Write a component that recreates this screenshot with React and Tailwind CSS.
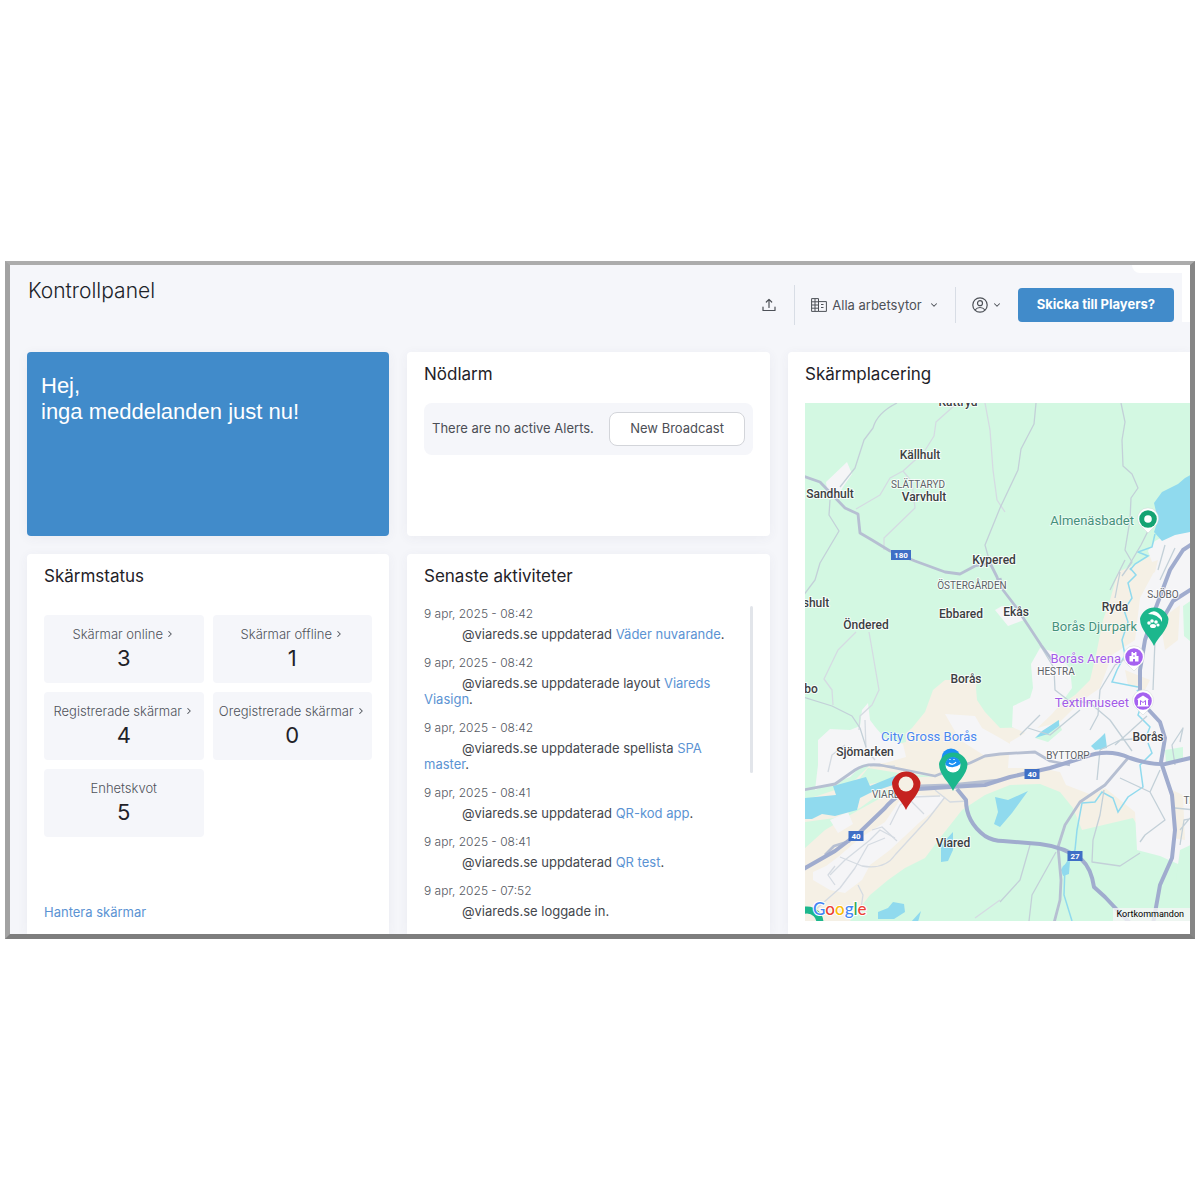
import {ChevronDown, ChevronRight} from "lucide-react";

const stats = [
    {label: "Skärmar online", value: 3, link: true},
    {label: "Skärmar offline", value: 1, link: true},
    {label: "Registrerade skärmar", value: 4, link: true},
    {label: "Oregistrerade skärmar", value: 0, link: true},
    {label: "Enhetskvot", value: 5, link: false},
];

const activities = [
    {date: "9 apr, 2025 - 08:42", text: "@viareds.se uppdaterad", target: "Väder nuvarande"},
    {date: "9 apr, 2025 - 08:42", text: "@viareds.se uppdaterade layout", target: "Viareds Viasign"},
    {date: "9 apr, 2025 - 08:42", text: "@viareds.se uppdaterade spellista", target: "SPA master"},
    {date: "9 apr, 2025 - 08:41", text: "@viareds.se uppdaterad", target: "QR-kod app"},
    {date: "9 apr, 2025 - 08:41", text: "@viareds.se uppdaterad", target: "QR test"},
    {date: "9 apr, 2025 - 07:52", text: "@viareds.se loggade in", target: null},
];

const places = [
    {name: "Kattryd", x: 958, y: 406},
    {name: "Källhult", x: 920, y: 459},
    {name: "Varvhult", x: 924, y: 501},
    {name: "Sandhult", x: 830, y: 498},
    {name: "Kypered", x: 994, y: 564},
    {name: "Ebbared", x: 961, y: 618},
    {name: "Ekås", x: 1016, y: 616},
    {name: "Ryda", x: 1115, y: 611},
    {name: "Öndered", x: 866, y: 629},
    {name: "Borås", x: 966, y: 683},
    {name: "Borås", x: 1148, y: 741},
    {name: "Sjömarken", x: 865, y: 756},
    {name: "Viared", x: 953, y: 847},
    {name: "shult", x: 816, y: 607},
    {name: "bo", x: 811, y: 693},
];

const districts = [
    {name: "SLÄTTARYD", x: 918, y: 488},
    {name: "ÖSTERGÅRDEN", x: 972, y: 589},
    {name: "SJÖBO", x: 1163, y: 598},
    {name: "HESTRA", x: 1056, y: 675},
    {name: "BYTTORP", x: 1068, y: 759},
    {name: "VIARED", x: 889, y: 798},
    {name: "TRANDARED", x: 1212, y: 804},
];

const shields = [
    {no: "180", x: 901, y: 555, w: 20},
    {no: "40", x: 856, y: 836, w: 15},
    {no: "40", x: 1032, y: 774, w: 15},
    {no: "27", x: 1075, y: 856, w: 15},
];

const trunkRoads = [
    "M800 871 835 851 860 832 885 808 Q898 792 918 789 L950 787 985 785 1010 777 1050 768 1085 757 Q1108 748 1130 758 Q1150 765 1165 764 L1195 757",
    "M957 789 966 800 Q966 822 985 836 Q993 841 1003 841 L1040 844 Q1065 847 1082 860 Q1091 868 1094 887 L1105 897 1120 913 1130 923",
    "M1195 542 1183 550 1170 570 1155 610 1145 640 1140 670 1140 692 1147 708 1160 722 1165 738 1161 762 1172 795 1175 830 1172 858 1160 885 1153 924",
    "M1152 625 1165 615 1173 601 1195 587",
];

const mainRoads = [
    "M803 476 820 482 845 508 858 514 860 533 872 540 890 551 915 561 945 572 960 574 975 566 990 563",
    "M803 790 835 784 855 770 Q865 763 880 765 L905 770 935 776 950 770 970 763 985 756 1000 754 1035 752 1050 761 1070 765",
    "M1000 578 1003 590 1016 607 1041 645 1052 660",
    "M1128 758 1105 785 1080 802 1065 825 1058 847 1061 880 1060 900 1054 923",
    "M990 563 997 577 1000 586",
    "M825 855 834 846 850 841 M920 786 950 785 1000 780",
];

const smallRoads = [
    "M897 403 Q877 413 873 428 L864 440 855 468 840 487",
    "M830 500 829 515 839 531 820 563 815 580 803 596",
    "M803 697 832 706 852 716 860 728 866 747",
    "M1036 403 1034 424 1021 449 1018 470 1000 508 985 545 990 563",
    "M1121 403 1125 422 1122 440 1123 466 1132 474 1138 488 1131 498 1130 520 1125 550 1132 562 1122 576",
    "M1152 523 1141 545 1128 567",
    "M1040 645 1054 668 1055 690 1068 700 1090 703 1110 720 1132 751",
    "M1110 590 1125 560 M1115 598 1120 572",
    "M1140 650 1115 665 1100 690 1098 715 1090 730",
    "M1028 728 1050 735 1080 710 M1020 735 1040 715",
    "M1097 780 1100 750 1120 740 1145 738 M1115 745 1147 716",
    "M1120 778 1150 792 1165 820 1145 835 1140 842 M1150 792 1160 770",
    "M1175 765 1172 745 1183 728 1180 742",
    "M1175 808 1195 810 M1180 830 1190 818 M1180 845 1184 820 1195 818",
    "M1030 845 1020 880 1000 902",
    "M1056 852 1032 895 1029 921",
    "M1104 790 1100 815 1093 840 1092 862 1120 866 1140 853",
    "M1155 640 1153 690 M1165 545 1158 570 M1175 548 1160 580",
];

const paleRoads = [
    "M955 405 936 422 934 436 924 452 903 471 890 478 880 495 856 509",
    "M903 471 912 482 915 508 884 538 884 550",
    "M985 403 990 430 993 470 997 500 1005 512",
    "M856 632 838 650 824 679 832 690 833 705",
    "M869 632 873 655 879 690 872 705 860 716 859 730",
    "M840 857 862 866 Q885 870 895 855 L928 819 945 797",
    "M830 875 845 860 870 840 880 830 895 838 M890 825 900 805 912 797 940 796",
    "M815 910 840 888 855 868 868 845 885 838 M858 885 863 895 860 915",
    "M835 885 828 875 835 866 M872 830 882 827 897 841 M910 800 924 814",
    "M845 745 832 755 828 772 M865 720 866 750 875 760 M870 766 895 766",
    "M935 790 950 802 968 801 M975 918 1000 900",
];

const rivers = [
    "M1130 568 1136 575 1128 583 1132 598 1124 610 1128 622 1122 640 1125 655 1117 670 1112 682 1138 687",
    "M1155 534 1152 547 1138 552 1148 556 1135 564 1130 570",
    "M1148 743 1152 753 1140 765 1143 787 1128 797 1118 812 1113 798 1102 792 1095 802 1082 803 1077 830 1075 850 1065 866 1064 895 1072 921",
    "M1137 690 1143 700 1138 715 1150 727 1146 737",
];

// teardrop pin, tip at (x, y)
function Pin({x, y, color, children}) {
    return (
        <g transform={`translate(${x} ${y})`}>
            <path d="M0 0C-3-8-14-16-14-27A14.500 14 0 0 1 14.500-27C14.500-16 3-8 0 0Z" fill={color}/>
            {children}
        </g>
    );
}

// small round point of interest marker, centred on (x, y)
function Poi({x, y, color, children}) {
    return (
        <g transform={`translate(${x} ${y})`}>
            <path d="M0 14 -6 8A10.500 10.500 0 1 1 6 8Z" fill="#fff" stroke="#cfd6d4" strokeWidth="0.500"/>
            <circle r="8.800" fill={color}/>
            {children}
        </g>
    );
}

function Map() {
    return (
        <svg viewBox="805 403 385 518" preserveAspectRatio="xMinYMin slice" className="block w-full h-[518px]" role="img" aria-label="Karta">
            <rect x="805" y="403" width="1200" height="518" fill="#d3f8e2"/>

            {/* built-up areas */}
            <path fill="#f5f0e5" d="M1200 540 1155 553 1140 562 1118 572 1110 600 1103 620 1096 655 1090 680 1075 695 1050 712 1030 727 1000 728 985 712 977 700 976 688 977 680 945 680 933 690 925 712 912 728 880 755 850 785 805 800V921H850L870 895 888 880 905 868 925 858 940 838 962 810 985 795 1010 785 1040 784 1060 792 1073 808 1082 830 1133 818 1140 830 1200 840Z"/>
            <path fill="#d3f8e2" d="M805 745 818 740 818 768 805 782Z M868 730 905 728 906 742 880 748Z M805 822 835 818 860 808 885 790 895 790 850 815 825 830 805 848Z M868 768 905 774 940 776 905 778 870 784 860 778Z"/>
            <path fill="#f5f5f7" d="M826 482 847 462 852 474 843 487 836 500 828 497Z M995 610 1002 606 1022 612 1024 620 1008 626Z"/>
            <path fill="#f5f5f7" d="M818 740 830 729 850 730 860 726 862 710 868 703 870 720 876 728 885 738 903 744 906 757 885 763 862 765 850 777 825 786 815 790 818 765Z"/>
            <path fill="#f5f5f7" d="M945 714 975 716 982 728 1000 738 1020 750 985 756 960 740Z"/>
            <path fill="#f5f5f7" d="M838 857 860 838 885 822 900 800 918 795 945 797 935 810 920 822 890 850 870 865 862 880 845 893 830 890 813 880 813 872 826 866Z M830 820 848 812 853 824 838 833Z"/>
            <path fill="#f5f5f7" d="M1012 727 1013 706 1030 698 1033 688 1031 664 1040 648 1055 652 1070 668 1072 688 1062 702 1052 714 1030 735Z"/>
            <path fill="#f5f5f7" d="M1200 531 1170 533 1155 541 1148 551 1155 570 1140 598 1135 640 1112 655 1100 688 1080 702 1060 722 1030 730 1010 742 1008 768 1040 768 1060 772 1066 785 1092 795 1105 788 1135 812 1137 850 1160 856 1178 864 1195 845Z"/>
            <path fill="#f5f0e5" d="M1143 565 1158 560 1155 572 1142 580Z M1160 620 1180 605 1178 640 1165 650Z M1172 790 1183 795 1185 840 1173 838Z M1125 670 1150 680 1145 690 1128 685Z M1105 795 1113 796 1125 815 1095 822Z"/>
            <path fill="#d3f8e2" d="M1183 606 1195 598V645L1184 636Z M1165 750 1183 747 1183 760 1166 763Z M1180 850 1195 843V880H1176Z M1035 738 1058 720 1062 730 1048 742Z"/>

            {/* lakes */}
            <g fill="#90daee">
                <path d="M1200 470 1185 478 1178 484 1162 492 1154 503 1158 520 1154 532 1162 541 1175 535 1200 530Z"/>
                <path d="M805 798 836 795 833 786 866 777 870 786 897 775 896 784 872 792 860 798 857 810 835 816 822 814 812 819 805 819Z"/>
                <path d="M995 797 1008 800 1028 791 1012 813 1000 827 994 824 998 812Z"/>
                <path d="M941 845 953 832 953 850 948 861 941 862Z"/>
                <path d="M878 912 888 908 893 902 904 904 905 912 894 919 878 919Z M911 922 921 911 918 922Z"/>
                <path d="M1035 738 1042 731 1059 720 1059 726 1048 734Z M1091 746 1100 738 1105 733 1107 748 1095 750Z"/>
                <path d="M1063 866 1070 861 1069 874 1063 876 1061 870Z"/>
            </g>
            <g fill="none" stroke="#90daee" strokeWidth="1.500">
                {rivers.map((d) => <path key={d} d={d}/>)}
            </g>

            {/* roads */}
            <g fill="none" strokeLinejoin="round">
                <g stroke="#d5dbe2" strokeWidth="1.300">{paleRoads.map((d) => <path key={d} d={d}/>)}</g>
                <g stroke="#c3d0d8" strokeWidth="1.300">{smallRoads.map((d) => <path key={d} d={d}/>)}</g>
                <g stroke="#b6bfd2" strokeWidth="2.800">{mainRoads.map((d) => <path key={d} d={d}/>)}</g>
                <g stroke="#a0acce" strokeWidth="4">{trunkRoads.map((d) => <path key={d} d={d}/>)}</g>
            </g>

            {shields.map((s) => (
                <g key={`${s.no}-${s.x}`}>
                    <rect x={s.x - s.w / 2} y={s.y - 5} width={s.w} height="10" fill="#3f6fc6"/>
                    <text x={s.x} y={s.y + 3} textAnchor="middle" fill="#fff" className="text-[8px] font-bold">{s.no}</text>
                </g>
            ))}

            <g textAnchor="middle" stroke="#fff" strokeWidth="2" strokeOpacity="0.800" paintOrder="stroke" strokeLinejoin="round">
                <g fill="#3c3e42" className="text-[12px] font-medium">
                    {places.map((p) => <text key={`${p.name}-${p.x}`} x={p.x} y={p.y}>{p.name}</text>)}
                </g>
                <g fill="#5c6166" className="text-[10px]">
                    {districts.map((p) => <text key={p.name} x={p.x} y={p.y}>{p.name}</text>)}
                </g>
            </g>

            <g textAnchor="end" stroke="#fff" strokeWidth="1.500" strokeOpacity="0.700" paintOrder="stroke" className="text-[13px]">
                <text x="1134" y="525" fill="#45917b">Almenäsbadet</text>
                <text x="1137" y="631" fill="#45917b">Borås Djurpark</text>
                <text x="1121" y="663" fill="#a35ce8">Borås Arena</text>
                <text x="1129" y="707" fill="#a35ce8">Textilmuseet</text>
                <text x="977" y="741" fill="#4a86ee">City Gross Borås</text>
            </g>

            <Poi x={1148} y={519} color="#15a373"><circle r="3.800" fill="#fff"/></Poi>
            <Poi x={1134} y={657} color="#a562f0">
                <path fill="#fff" d="M-4.500 4.500V-1H-2.500V-5H-1V-4H1V-5H2.500V-1H4.500V4.500H1V2H-1V4.500Z"/>
                <path stroke="#a562f0" d="M-1-1H1"/>
            </Poi>
            <Poi x={1143} y={701} color="#a562f0">
                <path fill="#fff" d="M-5.500-2 0-5.500 5.500-2V-1H5V4H5.500V5.500H-5.500V4H-5V-1H-5.500Z"/>
                <path fill="none" stroke="#a562f0" d="M-2.500 4V-.5L0 1.500 2.500-.5V4"/>
            </Poi>

            <circle cx="951" cy="758" r="9.500" fill="#1a90f3"/>
            <Pin x={953} y={791} color="#1cb78d">
                <circle cy="-26" r="7.500" fill="#fff"/>
                <path fill="#1a90f3" d="M-7.500-26A7.500 7.500 0 0 1 7.500-27Q0-21-7.500-26Z"/>
                <path fill="none" stroke="#fff" strokeWidth="1.200" d="M-4-28Q0-25 3-29M-3-31V-32M1-31V-32"/>
            </Pin>
            <Pin x={1154} y={646} color="#1cb78d">
                <path fill="#fff" d="M-6-32Q2-39 8-28L8-24Q4-32-6-32Z"/>
                <g fill="#fff">
                    <ellipse cx="-1" cy="-20" rx="3" ry="2"/>
                    <circle cx="-5" cy="-23" r="1.800"/>
                    <circle cx="-2" cy="-25" r="1.800"/>
                    <circle cx="2" cy="-24" r="1.800"/>
                    <circle cx="4" cy="-21" r="1.600"/>
                </g>
            </Pin>
            <Pin x={906} y={810} color="#c5221f"><circle cy="-26" r="7.500" fill="#f5f0e5"/></Pin>

            {/* marker that is cut off by the map's corner */}
            <circle cx="807" cy="923" r="13" fill="none" stroke="#1cb78d" strokeWidth="7"/>

            <text x="813" y="915" stroke="#fff" strokeWidth="2" paintOrder="stroke" className="text-[17px] font-medium font-['Lato',sans-serif]">
                <tspan fill="#4285f4">G</tspan>
                <tspan fill="#ea4335">o</tspan>
                <tspan fill="#fbbc05">o</tspan>
                <tspan fill="#4285f4">g</tspan>
                <tspan fill="#34a853">l</tspan>
                <tspan fill="#ea4335">e</tspan>
            </text>
        </svg>
    );
}

function Card({title, className = "", children}) {
    return (
        <section className={`bg-white shadow-[0_2px_12px_rgba(60,70,100,0.06)] px-[17px] pt-3 ${className}`}>
            <h2 className="text-[17px] leading-5 text-[#1f2228]">{title}</h2>
            {children}
        </section>
    );
}

function Header() {
    return (
        <header className="flex items-start justify-between pl-[18px] pr-4 h-[87px]">
            <h1 className="mt-3 text-[21px] leading-7 font-light text-[#202329]">Kontrollpanel</h1>
            <div className="flex items-center mt-5 h-10 text-[#4d5157]">
                <button type="button" aria-label="Ladda upp" className="mr-[18px]">
                    <svg width="14" height="14" viewBox="0 0 14 14" fill="none" stroke="currentColor" strokeWidth="1.200" strokeLinecap="round" strokeLinejoin="round">
                        <path d="M7 9.500V1.500M4.300 4 7 1.300 9.700 4M1 9V12.500H13V9"/>
                    </svg>
                </button>
                <div className="w-px h-10 bg-[#d8dde5]"/>
                <label className="flex items-center ml-4">
                    <svg aria-hidden="true" width="16" height="14" viewBox="0 0 16 14" fill="none" stroke="currentColor">
                        <path d="M.6.600H7.500V13.400H.6ZM7.500 3.600H15.400V13.400H7.500M.6 3.800H7.500M.6 7H7.500M.6 10.200H7.500M4 .6V13.400M10 6.500H12.500M10 9.500H12.500"/>
                    </svg>
                    <select aria-label="Arbetsyta" className="appearance-none field-sizing-content bg-transparent ml-[5px] text-[13px] leading-5">
                        <option>Alla arbetsytor</option>
                    </select>
                    <ChevronDown size={10} strokeWidth={2.5} className="ml-[7px]"/>
                </label>
                <div className="w-px h-9 ml-4 bg-[#d8dde5]"/>
                <button type="button" aria-label="Konto" className="flex items-center gap-1 ml-4">
                    <svg width="16" height="16" viewBox="0 0 16 16" fill="none" stroke="currentColor" strokeWidth="1.200">
                        <circle cx="8" cy="8" r="7.200"/>
                        <circle cx="8" cy="6.200" r="2.500"/>
                        <path d="M3 13Q5 10.500 8 10.500T13 13"/>
                    </svg>
                    <ChevronDown size={10} strokeWidth={2.5}/>
                </button>
                <button type="button" className="ml-4 h-[34px] px-[19px] rounded bg-[#418bca] text-white text-[13px] font-bold">
                    Skicka till Players?
                </button>
            </div>
        </header>
    );
}

export default function App() {
    return (
        <div className="flex items-center min-h-screen bg-white px-[5px] font-['Inter',sans-serif]">
            <main className="relative w-full overflow-hidden bg-[#f5f6fa] border-[5px] border-t-4 border-t-[#acacac] border-l-[#a2a2a2] border-r-[#868686] border-b-[#7e7e7e]">
                <div className="absolute top-0 right-0 w-[58px] h-2 rounded-bl-lg bg-white"/>
                <div className="absolute top-0 right-0 w-2 h-[57px] bg-white"/>
                <Header/>

                <div className="grid grid-cols-[362fr_363fr_402fr] grid-rows-[184px_1fr] gap-[18px] pl-[17px]">
                    <section className="rounded bg-[#418bca] px-3.5 pt-[21px] text-white text-[22px] leading-[26px] font-['Liberation_Sans',Arial,sans-serif] shadow-[0_2px_12px_rgba(60,70,100,0.06)]">
                        <p>Hej,<br/>inga meddelanden just nu!</p>
                    </section>

                    <Card title="Nödlarm" className="rounded">
                        <div className="flex items-center justify-between mt-[19px] h-[52px] px-2 rounded-lg bg-[#f5f6fa] text-[13px] text-[#4b4e55]">
                            <p>There are no active Alerts.</p>
                            <button type="button" className="h-[34px] px-5 rounded-lg border border-[#d3d5da] bg-white">
                                New Broadcast
                            </button>
                        </div>
                    </Card>

                    <Card title="Skärmplacering" className="row-span-2 rounded-tl pr-0 pb-[13px]">
                        <div className="relative mt-[19px] font-['Roboto',sans-serif]">
                            <Map/>
                            <button type="button" className="absolute right-0 bottom-0 pl-1 pr-1.5 bg-[#f5f5f5]/80 text-[9px] leading-[13px] text-black">
                                Kortkommandon
                            </button>
                        </div>
                    </Card>

                    <Card title="Skärmstatus" className="flex flex-col rounded-t pb-[13px]">
                        <div className="grid grid-cols-2 gap-[9px] mt-[29px]">
                            {stats.map((s) => (
                                <div key={s.label} className="h-[68px] pt-2.5 rounded bg-[#f5f6fa] text-center">
                                    {s.link
                                        ? <a href="#" className="flex items-center justify-center gap-0.5 text-[13px] leading-[18px] font-light text-[#4f535a] whitespace-nowrap">
                                            {s.label}
                                            <ChevronRight size={10} strokeWidth={2.5}/>
                                        </a>
                                        : <p className="text-[13px] leading-[18px] font-light text-[#4f535a]">{s.label}</p>}
                                    <p className="text-[22px] leading-[30px] text-[#1f2228]">{s.value}</p>
                                </div>
                            ))}
                        </div>
                        <a href="#" className="mt-auto text-[13px] leading-[18px] text-[#5b93d3]">Hantera skärmar</a>
                    </Card>

                    <Card title="Senaste aktiviteter" className="rounded-t">
                        <div className="flex justify-between mt-5">
                            <ul className="flex flex-col gap-[13px] w-[312px]">
                                {activities.map((a, i) => (
                                    <li key={i}>
                                        <p className="text-[12px] leading-4 font-light text-[#54585f]">{a.date}</p>
                                        <p className="mt-1 indent-[38px] text-[13px] leading-4 text-[#44474d]">
                                            {a.text}{a.target && <> <a href="#" className="text-[#5b93d3]">{a.target}</a></>}.
                                        </p>
                                    </li>
                                ))}
                            </ul>
                            <div className="w-[3px] h-[167px] rounded-full bg-[#e2e5ea]"/>
                        </div>
                    </Card>
                </div>
            </main>
        </div>
    );
}
